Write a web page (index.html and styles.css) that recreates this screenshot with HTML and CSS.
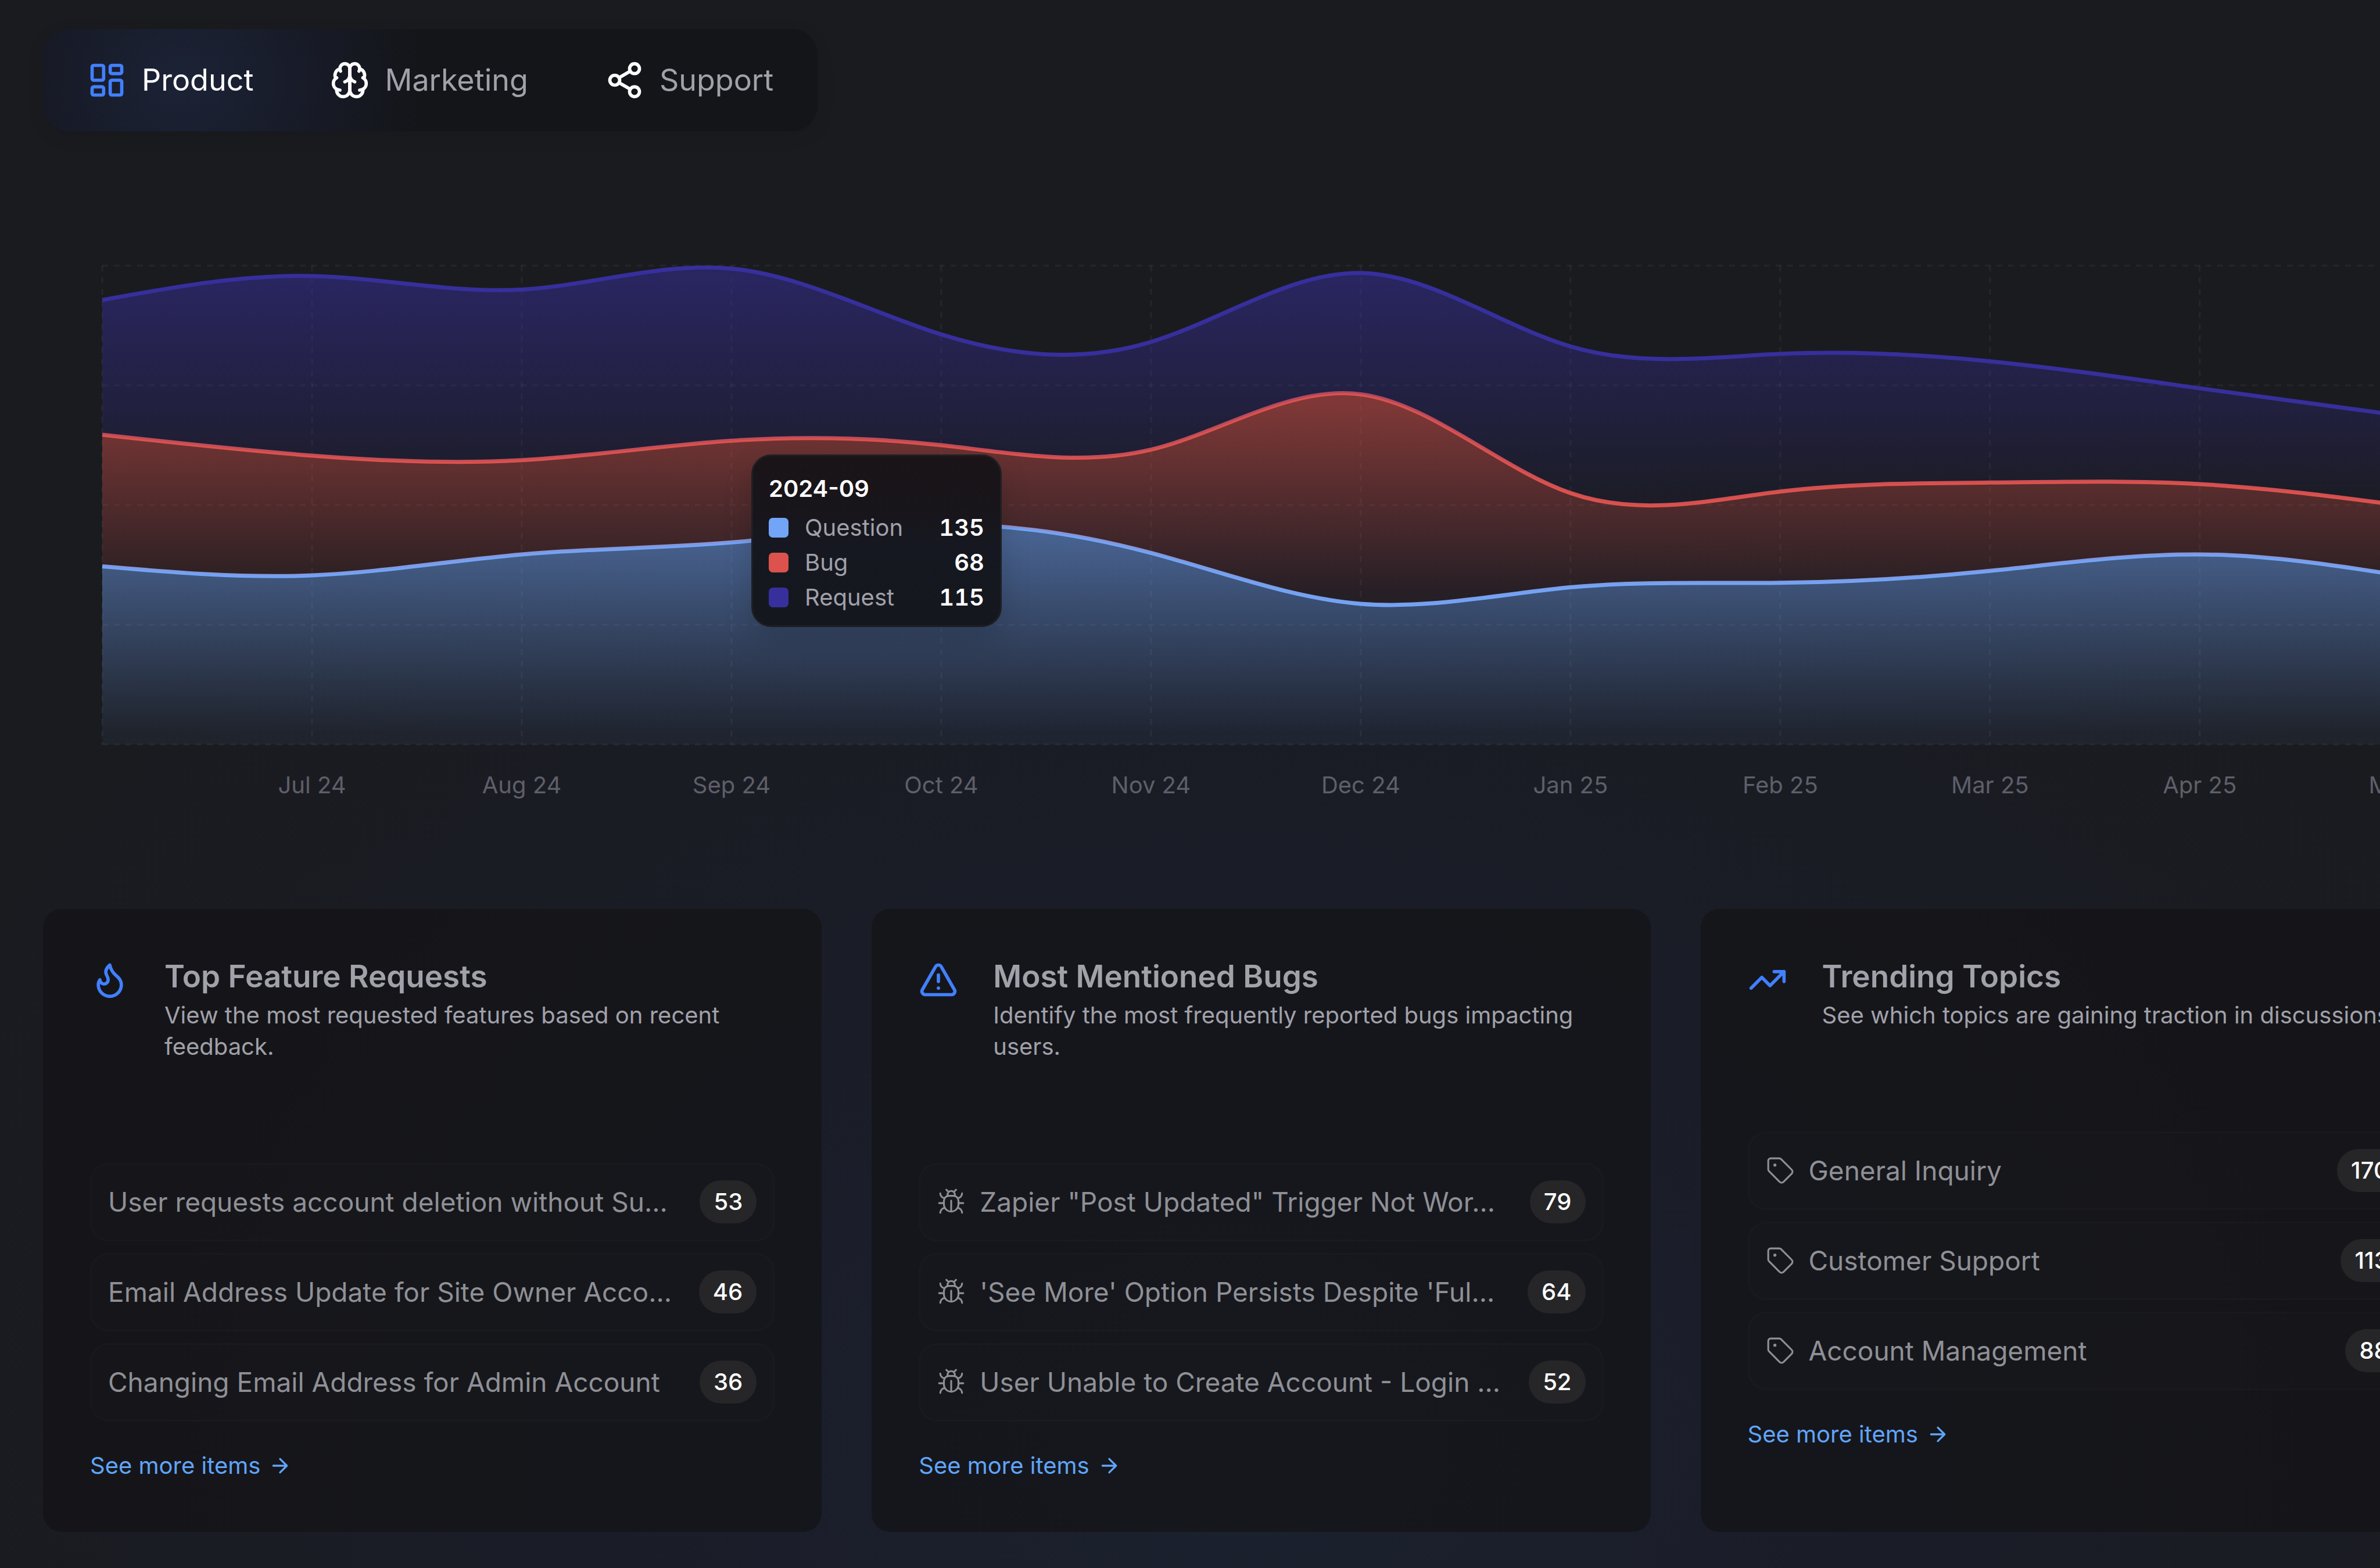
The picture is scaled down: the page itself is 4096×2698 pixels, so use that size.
FILE: index.html
```html
<!DOCTYPE html>
<html lang="en">
<head>
<meta charset="utf-8">
<title>Feedback overview</title>
<link rel="stylesheet" href="styles.css">
</head>
<body>
<svg class="sprite" aria-hidden="true">
  <symbol id="i-bug" viewBox="0 0 24 24"><path d="m8 2 1.88 1.88M14.12 3.88 16 2M9 7.13v-1a3.003 3.003 0 1 1 6 0v1"/><path d="M12 20c-3.3 0-6-2.7-6-6v-3a4 4 0 0 1 4-4h4a4 4 0 0 1 4 4v3c0 3.3-2.7 6-6 6M12 20v-9M6.53 9C4.6 8.8 3 7.1 3 5M6 13H2M3 21c0-2.1 1.7-3.9 3.8-4M20.97 5c0 2.1-1.6 3.8-3.5 4M22 13h-4M17.2 17c2.1.1 3.8 1.9 3.8 4"/></symbol>
  <symbol id="i-tag" viewBox="0 0 24 24"><path d="M12.586 2.586A2 2 0 0 0 11.172 2H4a2 2 0 0 0-2 2v7.172a2 2 0 0 0 .586 1.414l8.704 8.704a2.426 2.426 0 0 0 3.42 0l6.58-6.58a2.426 2.426 0 0 0 0-3.42z"/><circle cx="7.5" cy="7.5" r=".5" fill="currentColor"/></symbol>
  <symbol id="i-arrow" viewBox="0 0 24 24"><path d="M5 12h14M12 5l7 7-7 7"/></symbol>
</svg>
<main class="page">
  <nav class="tabs" aria-label="Teams">
    <button class="tab tab-active" type="button">
      <svg class="icon" viewBox="0 0 24 24"><rect width="7" height="9" x="3" y="3" rx="1"/><rect width="7" height="5" x="14" y="3" rx="1"/><rect width="7" height="9" x="14" y="12" rx="1"/><rect width="7" height="5" x="3" y="16" rx="1"/></svg>
      <span>Product</span>
    </button>
    <button class="tab" type="button">
      <svg class="icon" viewBox="0 0 24 24"><path d="M12 5a3 3 0 1 0-5.997.125 4 4 0 0 0-2.526 5.77 4 4 0 0 0 .556 6.588A4 4 0 1 0 12 18Z"/><path d="M12 5a3 3 0 1 1 5.997.125 4 4 0 0 1 2.526 5.77 4 4 0 0 1-.556 6.588A4 4 0 1 1 12 18Z"/><path d="M15 13a4.5 4.5 0 0 1-3-4 4.5 4.5 0 0 1-3 4M17.599 6.5a3 3 0 0 0 .399-1.375M6.003 5.125A3 3 0 0 0 6.401 6.5M3.477 10.896a4 4 0 0 1 .585-.396M19.938 10.5a4 4 0 0 1 .585.396M6 18a4 4 0 0 1-1.967-.516M19.967 17.484A4 4 0 0 1 18 18"/></svg>
      <span>Marketing</span>
    </button>
    <button class="tab" type="button">
      <svg class="icon" viewBox="0 0 24 24"><circle cx="18" cy="5" r="3"/><circle cx="6" cy="12" r="3"/><circle cx="18" cy="19" r="3"/><path d="m8.59 13.51 6.83 3.98M15.41 6.51l-6.82 3.98"/></svg>
      <span>Support</span>
    </button>
  </nav>

  <section class="chart" aria-label="Feedback per month">
    <svg id="plot" class="plot" viewBox="0 0 4096 940" role="img" aria-label="Questions, bugs and requests by month">
      <defs>
        <linearGradient id="fill-question" x1="0" y1="0" x2="0" y2="1"><stop class="stop-question" offset="5%" stop-opacity=".52"/><stop class="stop-question" offset="95%" stop-opacity=".06"/></linearGradient>
        <linearGradient id="fill-bug" x1="0" y1="0" x2="0" y2="1"><stop class="stop-bug" offset="5%" stop-opacity=".52"/><stop class="stop-bug" offset="95%" stop-opacity=".06"/></linearGradient>
        <linearGradient id="fill-request" x1="0" y1="0" x2="0" y2="1"><stop class="stop-request" offset="5%" stop-opacity=".52"/><stop class="stop-request" offset="95%" stop-opacity=".06"/></linearGradient>
      </defs>
    </svg>
    <div class="tooltip" role="tooltip">
      <p class="tooltip-title">2024-09</p>
      <dl class="tooltip-list">
        <div class="tooltip-row"><dt><i class="swatch swatch-question"></i>Question</dt><dd>135</dd></div>
        <div class="tooltip-row"><dt><i class="swatch swatch-bug"></i>Bug</dt><dd>68</dd></div>
        <div class="tooltip-row"><dt><i class="swatch swatch-request"></i>Request</dt><dd>115</dd></div>
      </dl>
    </div>
  </section>

  <section class="cards">
    <article class="card">
      <header class="card-head">
        <svg class="icon icon-blue" viewBox="0 0 24 24"><path d="M8.5 14.5A2.5 2.5 0 0 0 11 12c0-1.38-.5-2-1-3-1.072-2.143-.224-4.054 2-6 .5 2.5 2 4.9 4 6.5 2 1.6 3 3.5 3 5.5a7 7 0 1 1-14 0c0-1.153.433-2.294 1-3a2.5 2.5 0 0 0 2.5 2.5z"/></svg>
        <div>
          <h2 class="card-title">Top Feature Requests</h2>
          <p class="card-desc">View the most requested features based on recent feedback.</p>
        </div>
      </header>
      <ul class="rows">
        <li class="row"><span class="row-text">User requests account deletion without Su...</span><span class="badge">53</span></li>
        <li class="row"><span class="row-text">Email Address Update for Site Owner Acco...</span><span class="badge">46</span></li>
        <li class="row"><span class="row-text">Changing Email Address for Admin Account</span><span class="badge">36</span></li>
      </ul>
      <a class="more" href="#">See more items<svg class="icon-arrow"><use href="#i-arrow"/></svg></a>
    </article>

    <article class="card">
      <header class="card-head">
        <svg class="icon icon-blue" viewBox="0 0 24 24"><path d="m21.73 18-8-14a2 2 0 0 0-3.48 0l-8 14A2 2 0 0 0 4 21h16a2 2 0 0 0 1.73-3M12 9v4M12 17h.01"/></svg>
        <div>
          <h2 class="card-title">Most Mentioned Bugs</h2>
          <p class="card-desc">Identify the most frequently reported bugs impacting users.</p>
        </div>
      </header>
      <ul class="rows">
        <li class="row"><svg class="icon-row"><use href="#i-bug"/></svg><span class="row-text">Zapier "Post Updated" Trigger Not Wor...</span><span class="badge">79</span></li>
        <li class="row"><svg class="icon-row"><use href="#i-bug"/></svg><span class="row-text">'See More' Option Persists Despite 'Ful...</span><span class="badge">64</span></li>
        <li class="row"><svg class="icon-row"><use href="#i-bug"/></svg><span class="row-text">User Unable to Create Account - Login ...</span><span class="badge">52</span></li>
      </ul>
      <a class="more" href="#">See more items<svg class="icon-arrow"><use href="#i-arrow"/></svg></a>
    </article>

    <article class="card">
      <header class="card-head">
        <svg class="icon icon-blue" viewBox="0 0 24 24"><path d="m22 7-8.5 8.5-5-5L2 17M16 7h6v6"/></svg>
        <div>
          <h2 class="card-title">Trending Topics</h2>
          <p class="card-desc">See which topics are gaining traction in discussions.</p>
        </div>
      </header>
      <ul class="rows">
        <li class="row"><svg class="icon-row"><use href="#i-tag"/></svg><span class="row-text">General Inquiry</span><span class="badge">170</span></li>
        <li class="row"><svg class="icon-row"><use href="#i-tag"/></svg><span class="row-text">Customer Support</span><span class="badge">113</span></li>
        <li class="row"><svg class="icon-row"><use href="#i-tag"/></svg><span class="row-text">Account Management</span><span class="badge">88</span></li>
      </ul>
      <a class="more" href="#">See more items<svg class="icon-arrow"><use href="#i-arrow"/></svg></a>
    </article>
  </section>
</main>
<script src="chart.js"></script>
</body>
</html>
```
FILE: styles.css
```css
* { box-sizing: border-box; margin: 0; padding: 0; }

:root {
  --question: #72a4f7;
  --bug: #dc524c;
  --request: #372f9c;
  --muted: #a1a1aa;
}

body {
  min-height: 100vh;
  overflow: hidden;
  background:
    radial-gradient(ellipse 60% 70% at 52% 92%, #1c212f 0%, #1a1d28 45%, rgba(26, 27, 31, 0) 100%),
    #1a1b1f;
  color: #fff;
  font-family: Inter, "Liberation Sans", sans-serif;
}

.sprite { display: none; }

/* The board is wider than the window and runs off its right edge. */
.page {
  width: 106%;
  padding: 50px 74px 60px;
}

svg {
  fill: none;
  stroke: currentColor;
  stroke-width: 2;
  stroke-linecap: round;
  stroke-linejoin: round;
}

.icon { flex: none; width: 68px; height: 68px; }
.icon-blue { color: #4280ff; }

.tabs {
  display: flex;
  width: fit-content;
  height: 176px;
  padding: 0 10px;
  border-radius: 44px;
  background: radial-gradient(circle at 240px 50%, #1c2336 0, #181c2a 180px, #141519 420px), #141518;
  box-shadow: 0 8px 32px rgba(0, 0, 0, .08);
}

.tab {
  display: flex;
  align-items: center;
  gap: 26px;
  padding: 0 66px;
  border: 0;
  background: none;
  color: #fff;
  font: 400 52px/76px Inter, "Liberation Sans", sans-serif;
}
.tab span { color: var(--muted); }
.tab-active { color: #4280ff; }
.tab-active span { color: #fff; }

.chart {
  position: relative;
  margin-top: 228px;
  padding-left: 98px;
}
.plot { display: block; width: 100%; height: auto; }

.grid-line { stroke: #fff; stroke-opacity: .05; stroke-width: 3; stroke-dasharray: 10 10; stroke-linecap: butt; }
.area { stroke: none; }
.line { stroke-width: 7; stroke-linecap: butt; }
.line-question { stroke: var(--question); }
.line-bug { stroke: var(--bug); }
.line-request { stroke: var(--request); }
.stop-question { stop-color: var(--question); }
.stop-bug { stop-color: var(--bug); }
.stop-request { stop-color: var(--request); }
.tick { fill: #5e5f69; stroke: none; font-size: 40px; text-anchor: middle; }

.tooltip {
  position: absolute;
  left: 1219px;
  top: 328px;
  width: 431px;
  padding: 29px 27px 21px;
  border: 3px solid #1e1f23;
  border-radius: 34px;
  background: linear-gradient(#1a1418 0, #18151a 30%, #161821 55%, #15171e 100%);
  box-shadow: 0 20px 50px rgba(0, 0, 0, .15);
  font-size: 40px;
  line-height: 54px;
}
.tooltip-title { font-weight: 600; margin-bottom: 13px; }
.tooltip-list { display: grid; gap: 6px; }
.tooltip-row { display: flex; justify-content: space-between; }
.tooltip-row dt { display: flex; align-items: center; color: var(--muted); }
.tooltip-row dd { font-weight: 600; font-variant-numeric: tabular-nums; }
.swatch { width: 34px; height: 34px; margin-right: 28px; border-radius: 7px; }
.swatch-question { background: var(--question); }
.swatch-bug { background: var(--bug); }
.swatch-request { background: var(--request); }

.cards {
  display: grid;
  grid-template-columns: minmax(0, 67fr) minmax(0, 67fr) minmax(0, 66fr);
  gap: 86px;
  margin-top: 170px;
  padding-right: 21px;
}

.card {
  display: flex;
  flex-direction: column;
  min-height: 1072px;
  padding: 82px 81px;
  border-radius: 32px;
  background: rgba(20, 20, 22, .72);
}

.card-head { display: flex; align-items: flex-start; gap: 60px; }
.card-head .icon { margin-top: 6px; }
.card-title { margin-bottom: 6px; color: var(--muted); font-size: 53px; line-height: 68px; font-weight: 600; }
.card-desc { color: var(--muted); font-size: 40px; line-height: 54px; }

.rows { display: grid; gap: 20px; margin-top: 173px; list-style: none; }
.row {
  display: flex;
  align-items: center;
  height: 135px;
  padding: 0 28px;
  border: 3px solid rgba(255, 255, 255, .015);
  border-radius: 32px;
  background: rgba(255, 255, 255, .008);
}
.icon-row { flex: none; width: 50px; height: 50px; margin-right: 24px; color: #8f9096; stroke-width: 1.5; }
.row-text { flex: 1; color: #8f9096; font-size: 46px; line-height: 68px; white-space: nowrap; }
.badge {
  padding: 10px 24px;
  border-radius: 37px;
  background: #262628;
  font-size: 40px;
  line-height: 54px;
  font-weight: 500;
}

.more {
  display: flex;
  align-items: center;
  align-self: flex-start;
  gap: 14px;
  margin-top: 49px;
  color: #60a5fa;
  font-size: 40px;
  line-height: 54px;
  text-decoration: none;
}
.icon-arrow { width: 40px; height: 40px; }
```
FILE: chart.js
```js
const months = ["", "Jul 24", "Aug 24", "Sep 24", "Oct 24", "Nov 24", "Dec 24", "Jan 25", "Feb 25", "Mar 25", "Apr 25", "May 25"];
// Running totals: each series is stacked on the one before it.
const series = [
  { key: "question", top: [119, 113, 127, 135, 147, 128, 94, 105, 108, 116, 127, 112] },
  { key: "bug", top: [207, 193, 190, 203, 200, 197, 234, 168, 169, 175, 174, 159] },
  { key: "request", top: [297, 313, 304, 318, 274, 269, 315, 266, 261, 256, 238, 219] },
];

const STEP = 361, LEFT = 4, TOP = 3, HEIGHT = 824, MAX = 320;
const WIDTH = STEP * (months.length - 1);
const x = i => LEFT + i * STEP;
const y = v => TOP + HEIGHT * (1 - v / MAX);
const svg = document.getElementById("plot");

function add(name, attrs, text) {
  const el = document.createElementNS("http://www.w3.org/2000/svg", name);
  for (const k in attrs) el.setAttribute(k, attrs[k]);
  if (text) el.textContent = text;
  svg.appendChild(el);
}

// Control values of a natural cubic spline through the points.
function controls(p) {
  const n = p.length - 1, a = [0], b = [2], r = [p[0] + 2 * p[1]];
  for (let i = 1; i < n - 1; i++) { a[i] = 1; b[i] = 4; r[i] = 4 * p[i] + 2 * p[i + 1]; }
  a[n - 1] = 2; b[n - 1] = 7; r[n - 1] = 8 * p[n - 1] + p[n];
  for (let i = 1; i < n; i++) { const m = a[i] / b[i - 1]; b[i] -= m; r[i] -= m * r[i - 1]; }
  const c1 = [], c2 = [];
  c1[n - 1] = r[n - 1] / b[n - 1];
  for (let i = n - 2; i >= 0; i--) c1[i] = (r[i] - c1[i + 1]) / b[i];
  for (let i = 0; i < n - 1; i++) c2[i] = 2 * p[i + 1] - c1[i + 1];
  c2[n - 1] = (p[n] + c1[n - 1]) / 2;
  return [c1, c2];
}

function forward(p) {
  const [c1, c2] = controls(p);
  let d = "";
  for (let i = 0; i < p.length - 1; i++)
    d += `C${x(i) + STEP / 3},${c1[i]} ${x(i + 1) - STEP / 3},${c2[i]} ${x(i + 1)},${p[i + 1]}`;
  return d;
}

function backward(p) {
  const [c1, c2] = controls(p);
  let d = "";
  for (let i = p.length - 2; i >= 0; i--)
    d += `C${x(i + 1) - STEP / 3},${c2[i]} ${x(i) + STEP / 3},${c1[i]} ${x(i)},${p[i]}`;
  return d;
}

for (let k = 0; k <= 4; k++) {
  const gy = TOP + HEIGHT * k / 4;
  add("line", { class: "grid-line", x1: LEFT, x2: LEFT + WIDTH, y1: gy, y2: gy });
}
months.forEach((m, i) => {
  add("line", { class: "grid-line", x1: x(i), x2: x(i), y1: TOP, y2: TOP + HEIGHT });
  if (m) add("text", { class: "tick", x: x(i), y: 911 }, m);
});

let base = months.map(() => y(0));
for (const s of series) {
  const p = s.top.map(y), last = p.length - 1;
  const start = `M${x(0)},${p[0]}`;
  add("path", { class: "area", fill: `url(#fill-${s.key})`, d: `${start}${forward(p)}L${x(last)},${base[last]}${backward(base)}Z` });
  add("path", { class: `line line-${s.key}`, d: start + forward(p) });
  base = p;
}
```
